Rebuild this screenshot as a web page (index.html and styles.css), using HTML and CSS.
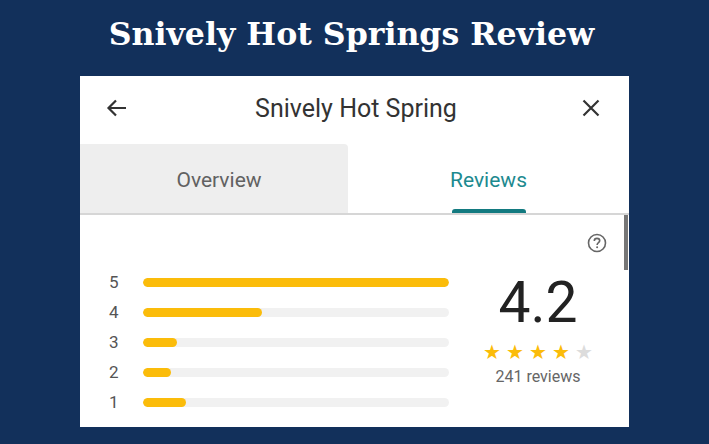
FILE: index.html
```html
<!DOCTYPE html>
<html lang="en">
<head>
    <meta charset="UTF-8">
    <meta name="viewport" content="width=device-width, initial-scale=1.0">
    <title>Snively Hot Springs Review</title>
    <link rel="stylesheet" href="styles.css">
</head>
<body>
    <h1 class="title">Snively Hot Springs Review</h1>

    <div class="card">
        <div class="header">
            <svg class="icon" width="24" height="24" viewBox="0 0 24 24">
                <path d="M21 12H4M11 4.5L3.5 12L11 19.5" fill="none" stroke="#333" stroke-width="2.2"/>
            </svg>
            <span class="place">Snively Hot Spring</span>
            <svg class="icon" width="24" height="24" viewBox="0 0 24 24">
                <path d="M4.5 4.5L19.5 19.5M19.5 4.5L4.5 19.5" fill="none" stroke="#333" stroke-width="2.2"/>
            </svg>
        </div>

        <div class="tabs">
            <div class="tab">Overview</div>
            <div class="tab active">Reviews</div>
        </div>

        <div class="content">
            <div class="scrollbar"></div>
            <div class="help">
                <svg width="20" height="20" viewBox="0 0 20 20">
                    <circle cx="10" cy="10" r="8.5" fill="none" stroke="#666" stroke-width="1.6"/>
                    <path d="M7.3 7.9C7.3 6.3 8.5 5.4 10 5.4C11.6 5.4 12.7 6.4 12.7 7.7C12.7 9.6 10.1 9.7 10.1 11.9" fill="none" stroke="#666" stroke-width="1.6"/>
                    <circle cx="10.1" cy="14.3" r="1" fill="#666"/>
                </svg>
            </div>

            <div class="stats">
                <div class="bars">
                    <div class="row"><span class="num">5</span><div class="track"><div class="fill" style="width: 100%"></div></div></div>
                    <div class="row"><span class="num">4</span><div class="track"><div class="fill" style="width: 39%"></div></div></div>
                    <div class="row"><span class="num">3</span><div class="track"><div class="fill" style="width: 11%"></div></div></div>
                    <div class="row"><span class="num">2</span><div class="track"><div class="fill" style="width: 9%"></div></div></div>
                    <div class="row"><span class="num">1</span><div class="track"><div class="fill" style="width: 14%"></div></div></div>
                </div>

                <div class="summary">
                    <div class="score">4.2</div>
                    <div class="stars">
                        <span class="on">&#9733;</span><span class="on">&#9733;</span><span class="on">&#9733;</span><span class="on">&#9733;</span><span>&#9733;</span>
                    </div>
                    <div class="count">241 reviews</div>
                </div>
            </div>
        </div>
    </div>
</body>
</html>
```

FILE: styles.css
```css
body {
    margin: 0;
    background-color: #12305b;
    font-family: Roboto, "Liberation Sans", sans-serif;
}

.title {
    margin: 0;
    padding-top: 14px;
    height: 64px;
    box-sizing: border-box;
    text-align: center;
    color: #fff;
    font-family: "DejaVu Serif", serif;
    font-size: 31.6px;
    line-height: 40px;
    font-weight: bold;
    padding-right: 6px;
}

.card {
    width: 549px;
    height: 351px;
    margin: 12px auto 0;
    background: #fff;
    display: flex;
    flex-direction: column;
}

.header {
    height: 68px;
    padding: 0 26px 4px 25px;
    box-sizing: border-box;
    display: flex;
    align-items: center;
    justify-content: space-between;
}

.place {
    font-size: 25px;
    color: #333;
    padding-left: 4px;
}

.tabs {
    height: 69px;
    display: flex;
    border-bottom: 2px solid #d6d6d6;
}

.tab {
    flex: 1;
    display: flex;
    justify-content: center;
    align-items: center;
    padding-top: 3px;
    font-size: 21px;
    color: #616161;
    position: relative;
}

.tab:first-child {
    flex: 0 0 268px;
    background: #eeeeee;
    border-top-right-radius: 4px;
    padding-left: 10px;
    box-sizing: border-box;
}

.tab.active {
    color: #1d8a8f;
}

.tab.active::after {
    content: "";
    position: absolute;
    bottom: 0;
    left: 50%;
    width: 74px;
    margin-left: -37px;
    height: 4px;
    background: #137a80;
    border-radius: 3px 3px 0 0;
}

.content {
    flex: 1;
    position: relative;
    padding: 18px 2px 0 29px;
}

.scrollbar {
    position: absolute;
    right: 1px;
    top: 0;
    width: 4px;
    height: 55px;
    background: #777;
}

.help {
    display: flex;
    justify-content: flex-end;
    padding-right: 20px;
    height: 20px;
}

.stats {
    display: flex;
    margin-top: 14px;
}

.bars {
    width: 340px;
}

.row {
    height: 30px;
    display: flex;
    align-items: center;
}

.num {
    width: 34px;
    font-size: 17px;
    color: #555;
}

.track {
    width: 306px;
    height: 9px;
    border-radius: 5px;
    background: #f1f1f1;
    overflow: hidden;
}

.fill {
    height: 100%;
    border-radius: 5px;
    background: #fbbc0a;
}

.summary {
    flex: 1;
    text-align: center;
    padding-top: 7px;
}

.score {
    font-size: 57px;
    line-height: 57px;
    color: #222;
}

.stars {
    margin-top: 12px;
    font-size: 20px;
    line-height: 18px;
    letter-spacing: 5px;
    padding-left: 5px;
    color: #dcdcdc;
}

.stars .on {
    color: #fbbc0a;
}

.count {
    margin-top: 7px;
    font-size: 16px;
    line-height: 18px;
    color: #666;
}
```
